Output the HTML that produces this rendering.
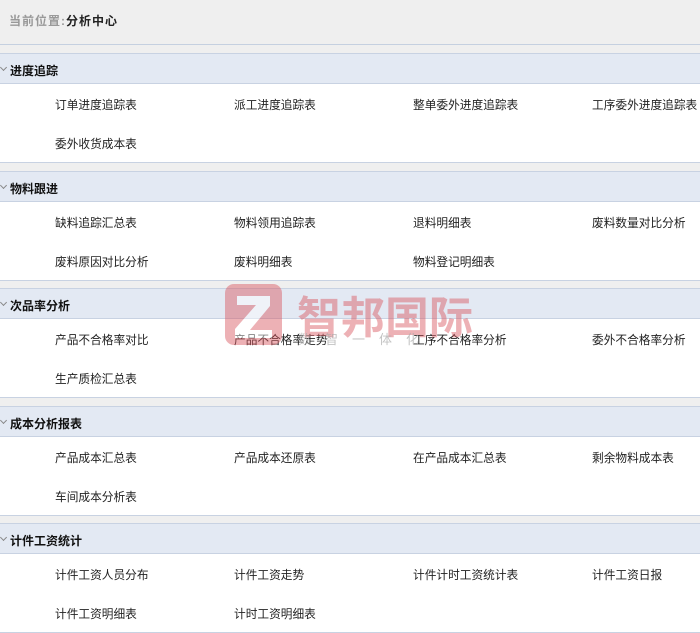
<!DOCTYPE html>
<html><head><meta charset="utf-8"><style>
*{margin:0;padding:0;box-sizing:border-box}
body{width:700px;height:633px;background:#efefef;position:relative;overflow:hidden;font-family:"Liberation Sans","Noto Sans CJK SC",sans-serif;font-size:12px;color:#222}
.top{position:absolute;left:0;top:0;width:700px;height:45px;border-bottom:1px solid #c5d0e0;background:#efefef}
.top span{position:absolute;left:9px;top:12px;font-size:12px;font-weight:bold;letter-spacing:1px}
.sec{position:absolute;left:0;width:700px}
.hd{height:31px;background:#e3e9f3;border-top:1px solid #c8d2e2;border-bottom:1px solid #c8d2e2;position:relative}
.hd b{position:absolute;left:10px;top:8px;font-size:12px;color:#111}
.hd i{position:absolute;left:1px;top:11px;width:5px;height:5px;border-right:1px solid #888;border-bottom:1px solid #888;transform:rotate(45deg)}
.bd{height:79px;background:#fff;border-bottom:1px solid #c8d2e2;position:relative}
.bd span{position:absolute;font-size:11.7px;color:#222}
</style></head><body>
<div class="top"><span><span style="position:static;color:#999">当前位置:</span>分析中心</span></div>

<div class="sec" style="top:53px"><div class="hd"><i></i><b>进度追踪</b></div><div class="bd">
<span style="left:55px;top:12px">订单进度追踪表</span><span style="left:234px;top:12px">派工进度追踪表</span><span style="left:413px;top:12px">整单委外进度追踪表</span><span style="left:592px;top:12px">工序委外进度追踪表</span>
<span style="left:55px;top:51px">委外收货成本表</span></div></div>

<div class="sec" style="top:171px"><div class="hd"><i></i><b>物料跟进</b></div><div class="bd">
<span style="left:55px;top:12px">缺料追踪汇总表</span><span style="left:234px;top:12px">物料领用追踪表</span><span style="left:413px;top:12px">退料明细表</span><span style="left:592px;top:12px">废料数量对比分析</span>
<span style="left:55px;top:51px">废料原因对比分析</span><span style="left:234px;top:51px">废料明细表</span><span style="left:413px;top:51px">物料登记明细表</span></div></div>

<div class="sec" style="top:288px"><div class="hd"><i></i><b>次品率分析</b></div><div class="bd">
<span style="left:55px;top:12px">产品不合格率对比</span><span style="left:234px;top:12px">产品不合格率走势</span><span style="left:413px;top:12px">工序不合格率分析</span><span style="left:592px;top:12px">委外不合格率分析</span>
<span style="left:55px;top:51px">生产质检汇总表</span></div></div>

<div class="sec" style="top:406px"><div class="hd"><i></i><b>成本分析报表</b></div><div class="bd">
<span style="left:55px;top:12px">产品成本汇总表</span><span style="left:234px;top:12px">产品成本还原表</span><span style="left:413px;top:12px">在产品成本汇总表</span><span style="left:592px;top:12px">剩余物料成本表</span>
<span style="left:55px;top:51px">车间成本分析表</span></div></div>

<div class="sec" style="top:523px"><div class="hd"><i></i><b>计件工资统计</b></div><div class="bd">
<span style="left:55px;top:12px">计件工资人员分布</span><span style="left:234px;top:12px">计件工资走势</span><span style="left:413px;top:12px">计件计时工资统计表</span><span style="left:592px;top:12px">计件工资日报</span>
<span style="left:55px;top:51px">计件工资明细表</span><span style="left:234px;top:51px">计时工资明细表</span></div></div>

<svg style="position:absolute;left:0;top:0" width="700" height="633">
<g opacity="0.45">
<rect x="225" y="284" width="57" height="61" rx="9" fill="#d9545c"/>
<path d="M237 296 H270 V306 L250 330 H272 V338 H235 V329 L256 305 H237 Z" fill="#fff"/>
<text x="297" y="333" font-family="Noto Sans CJK SC" font-size="44" font-weight="bold" fill="#d9545c">智邦国际</text>
</g>
<text x="298" y="344" font-family="Noto Sans CJK SC" font-size="13" fill="#aaa" opacity="0.7" letter-spacing="14">数智一体化</text>
</svg>
</body></html>
